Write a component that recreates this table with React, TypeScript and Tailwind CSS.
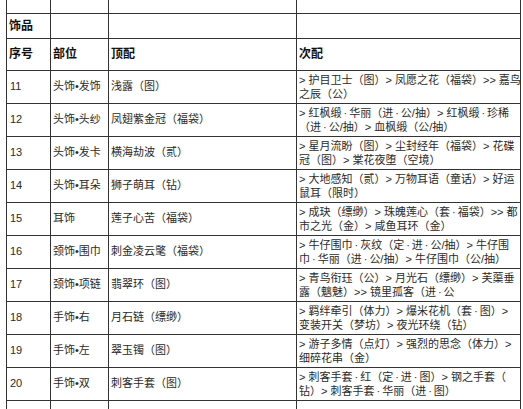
import React from "react";

type Row = {
  no: string;
  part: string;
  top: string;
  sub: [string, string];
};

const rows: Row[] = [
  {
    no: "11",
    part: "头饰•发饰",
    top: "浅露（图）",
    sub: ["> 护目卫士（图）> 凤愿之花（福袋）>> 嘉鸟", "之辰（公）"],
  },
  {
    no: "12",
    part: "头饰•头纱",
    top: "凤翅紫金冠（福袋）",
    sub: ["> 红枫缎·华丽（进·公/抽）> 红枫缎·珍稀", "（进·公/抽）> 血枫缎（公/抽）"],
  },
  {
    no: "13",
    part: "头饰•发卡",
    top: "横海劫波（贰）",
    sub: ["> 星月流盼（图）> 尘封经年（福袋）> 花碟", "冠（图）> 棠花夜堕（空境）"],
  },
  {
    no: "14",
    part: "头饰•耳朵",
    top: "狮子萌耳（钻）",
    sub: ["> 大地感知（贰）> 万物耳语（童话）> 好运", "鼠耳（限时）"],
  },
  {
    no: "15",
    part: "耳饰",
    top: "莲子心苦（福袋）",
    sub: ["> 成玦（缥缈）> 珠魄莲心（套·福袋）>> 都", "市之光（金）> 咸鱼耳环（金）"],
  },
  {
    no: "16",
    part: "颈饰•围巾",
    top: "刺金凌云氅（福袋）",
    sub: ["> 牛仔围巾·灰纹（定·进·公/抽）> 牛仔围", "巾·华丽（进·公/抽）> 牛仔围巾（公/抽）"],
  },
  {
    no: "17",
    part: "颈饰•项链",
    top: "翡翠环（图）",
    sub: ["> 青鸟衔珏（公）> 月光石（缥缈）> 芙蕖垂", "露（魑魅）>> 镜里孤客（进·公"],
  },
  {
    no: "18",
    part: "手饰•右",
    top: "月石链（缥缈）",
    sub: ["> 羁绊牵引（体力）> 爆米花机（套·图）>", "变装开关（梦坊）> 夜光环绕（钻）"],
  },
  {
    no: "19",
    part: "手饰•左",
    top: "翠玉镯（图）",
    sub: ["> 游子多情（点灯）> 强烈的思念（体力）>", "细碎花串（金）"],
  },
  {
    no: "20",
    part: "手饰•双",
    top: "刺客手套（图）",
    sub: ["> 刺客手套·红（定·进·图）> 钢之手套（", "钻）> 刺客手套·华丽（进·图）"],
  },
];

// middle dots get a little room on both sides, like the original page font
const Line = ({ text }: { text: string }) => {
  const parts = text.split("·");
  return (
    <span className="block whitespace-nowrap">
      {parts.map((p, i) => (
        <React.Fragment key={i}>
          {i > 0 && <span className="inline-block w-[0.7em] text-center">·</span>}
          {p}
        </React.Fragment>
      ))}
    </span>
  );
};

const cell = "border border-[#333] px-[2px] align-middle";

export default function App() {
  return (
    <div className="min-h-screen bg-white pl-[6px] font-['Liberation_Sans','Noto_Sans_CJK_SC',sans-serif] text-[11px] text-[#2a2a2a]">
      <table className="w-[514px] table-fixed border-collapse">
        <colgroup>
          <col className="w-[44px]" />
          <col className="w-[58px]" />
          <col className="w-[188px]" />
          <col className="w-[224px]" />
        </colgroup>
        <tbody>
          <tr className="h-[13px]">
            <td className={`${cell} border-t-0`} />
            <td className={`${cell} border-t-0`} />
            <td className={`${cell} border-t-0`} />
            <td className={`${cell} border-t-0`} />
          </tr>
          <tr className="h-[25px]">
            <td className={`${cell} text-[12px] font-bold text-[#111]`}>饰品</td>
            <td className={cell} />
            <td className={cell} />
            <td className={cell} />
          </tr>
          <tr className="h-[32px] text-[12px] font-bold text-[#111]">
            <td className={cell}>序号</td>
            <td className={cell}>部位</td>
            <td className={cell}>顶配</td>
            <td className={cell}>次配</td>
          </tr>
          {rows.map((r) => (
            <tr key={r.no} className="h-[33px]">
              <td className={`${cell} pl-[3px]`}>{r.no}</td>
              <td className={`${cell} whitespace-nowrap`}>{r.part}</td>
              <td className={cell}>{r.top}</td>
              <td className={`${cell} leading-[14px]`}>
                <Line text={r.sub[0]} />
                <Line text={r.sub[1]} />
              </td>
            </tr>
          ))}
          <tr className="h-[33px]">
            <td className={cell} />
            <td className={cell} />
            <td className={cell} />
            <td className={cell} />
          </tr>
        </tbody>
      </table>
    </div>
  );
}
